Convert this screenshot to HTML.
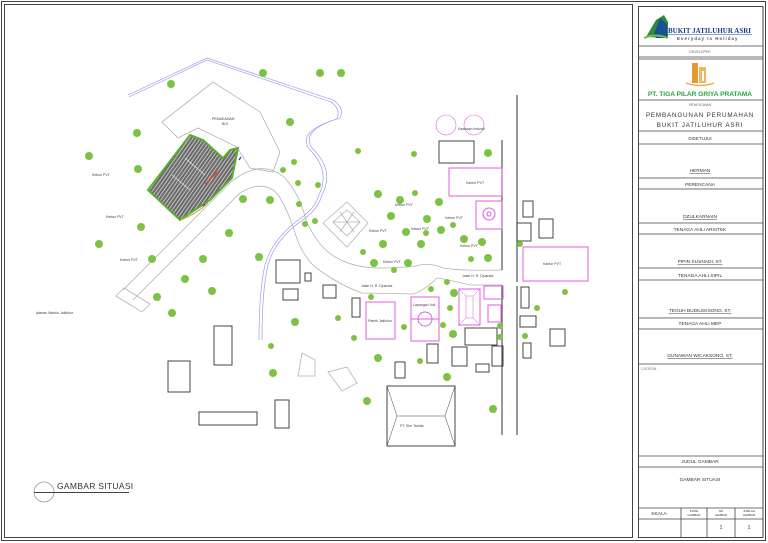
<!DOCTYPE html>
<html><head><meta charset="utf-8"><style>
html,body{margin:0;padding:0;background:#fff;}
svg{display:block;font-family:"Liberation Sans",sans-serif;}
</style></head><body>
<svg width="768" height="543" viewBox="0 0 768 543" xmlns="http://www.w3.org/2000/svg">
<defs>
<pattern id="rows" width="3" height="3" patternUnits="userSpaceOnUse" patternTransform="rotate(35)">
<rect width="3" height="3" fill="#6a6a6a"/><rect width="0.8" height="3" fill="#d8d8d8"/>
</pattern>
</defs>
<rect x="0" y="0" width="768" height="543" fill="#fff"/>
<rect x="1.5" y="1.5" width="764" height="539" fill="none" stroke="#444" stroke-width="1"/>
<rect x="4.5" y="4.5" width="628" height="533" fill="none" stroke="#444" stroke-width="1"/>
<rect x="638.5" y="6.5" width="124.5" height="531" fill="none" stroke="#444" stroke-width="1"/>

<!-- river -->
<g fill="none" stroke="#8f8ff0" stroke-width="0.6">
<path d="M128,95 L207,58 L333,100 Q345,108 340,118 Q300,130 312,148 Q335,170 322,195 Q318,210 300,222 Q275,240 268,265 Q262,290 262,340"/>
<path d="M129,97 L207,60 L331,102 Q341,109 337,119 Q297,131 309,149 Q331,170 319,195 Q315,209 297,221 Q272,240 265,265 Q259,290 259,340"/>
</g>
<!-- roads -->
<g fill="none" stroke="#b4b4b4" stroke-width="0.8">
<path d="M123,290 L232,181 Q262,158 285,178 Q300,195 306,220 Q318,248 337,258 Q355,268 380,268 Q400,268 415,266 Q430,262 443,268 Q460,271 502,270"/>
<path d="M133,300 L240,193 Q265,178 279,196 Q290,215 296,236 Q305,262 322,272 Q340,285 362,293 L413,294 Q425,290 437,278 Q450,280 470,285 L502,285"/>
<path d="M162,122 L213,82 L260,112 L280,152 L273,172 L250,168 L237,147 L198,128 L178,138 Z"/>
<path d="M302,353 L315,360 L315,376 L298,376 Z"/>
<path d="M328,372 L347,367 L357,383 L342,391 Z"/>
<path d="M323,223 L347,202 L368,223 L347,247 Z"/>
<path d="M333,222 L347,210 L360,222 L347,236 Z M333,222 L360,222 M340,212 L354,232 M354,212 L340,232"/>
<path d="M116,296 L124,288 L150,304 L142,312 Z"/>
</g>
<!-- right road -->
<g stroke="#555" stroke-width="1.2">
<line x1="502" y1="140" x2="502" y2="270"/>
<line x1="502" y1="285" x2="502" y2="435"/>
<line x1="517" y1="95" x2="517" y2="282"/>
<line x1="517" y1="286" x2="517" y2="435"/>
</g>
<!-- cemetery -->
<path d="M148,190 L190,135 L203,140 L223,158 L230,150 L238,148 L232,178 L210,200 L180,220 Z" fill="url(#rows)" stroke="#59b02c" stroke-width="2"/>
<path d="M172,175 L190,190 M185,158 L205,175" stroke="#eee" stroke-width="0.6"/>
<line x1="205" y1="184" x2="220" y2="170" stroke="#e44" stroke-width="1.2"/>
<path d="M180,220 Q195,215 208,203" stroke="#c8a030" stroke-width="1" fill="none"/>
<line x1="239" y1="160" x2="241" y2="157" stroke="#33c" stroke-width="1.2"/>
<line x1="203" y1="206" x2="205" y2="204" stroke="#33c" stroke-width="1.2"/>

<!-- black buildings -->
<g fill="none" stroke="#444" stroke-width="1">
<rect x="439" y="141" width="35" height="22"/>
<rect x="523" y="201" width="10" height="16"/>
<rect x="517" y="223" width="14" height="18"/>
<rect x="539" y="219" width="14" height="19"/>
<rect x="276" y="260" width="24" height="23"/>
<rect x="305" y="273" width="6" height="8"/>
<rect x="283" y="289" width="15" height="11"/>
<rect x="323" y="285" width="13" height="13"/>
<rect x="352" y="298" width="8" height="19"/>
<rect x="465" y="328" width="32" height="17"/>
<rect x="427" y="344" width="11" height="19"/>
<rect x="452" y="347" width="15" height="19"/>
<rect x="492" y="346" width="11" height="20"/>
<rect x="476" y="364" width="13" height="8"/>
<rect x="395" y="362" width="10" height="16"/>
<rect x="275" y="400" width="14" height="28"/>
<rect x="521" y="287" width="8" height="21"/>
<rect x="520" y="316" width="16" height="11"/>
<rect x="550" y="329" width="15" height="17"/>
<rect x="523" y="343" width="8" height="15"/>
<rect x="214" y="326" width="18" height="39"/>
<rect x="168" y="361" width="22" height="31"/>
<rect x="199" y="412" width="58" height="13"/>
<rect x="387" y="386" width="68" height="60"/>
<path d="M387,386 L397,416 L445,416 L455,386 M397,416 L387,446 M445,416 L455,446" stroke-width="0.5"/>
</g>
<!-- magenta -->
<g fill="none" stroke="#e05be0" stroke-width="1">
<rect x="449" y="168" width="53" height="28"/>
<rect x="476" y="201" width="26" height="28"/>
<circle cx="489" cy="214" r="6"/><circle cx="489" cy="214" r="2"/>
<rect x="523" y="247" width="65" height="34"/>
<rect x="366" y="302" width="29" height="37"/>
<rect x="411" y="297" width="28" height="44"/>
<line x1="411" y1="319" x2="439" y2="319"/><circle cx="425" cy="319" r="7"/>
<rect x="459" y="289" width="21" height="36"/>
<path d="M459,289 L466,296 L466,318 L459,325 M480,289 L473,296 L473,318 L480,325 M466,296 L473,296 M466,318 L473,318" stroke-width="0.5"/>
<rect x="484" y="286" width="19" height="13"/>
<rect x="488" y="305" width="13" height="17"/>
<circle cx="446" cy="125" r="10" stroke-width="0.6"/>
<circle cx="474" cy="125" r="10" stroke-width="0.6"/>
</g>

<!-- trees -->
<g fill="#7dc242">
<circle cx="171" cy="84" r="4"/><circle cx="263" cy="73" r="4"/><circle cx="320" cy="73" r="4"/><circle cx="341" cy="73" r="4"/>
<circle cx="290" cy="122" r="4"/><circle cx="137" cy="133" r="4"/><circle cx="89" cy="156" r="4"/><circle cx="138" cy="169" r="4"/>
<circle cx="358" cy="151" r="3"/><circle cx="294" cy="162" r="3"/><circle cx="283" cy="170" r="3"/><circle cx="298" cy="183" r="3"/>
<circle cx="318" cy="185" r="3"/><circle cx="378" cy="194" r="4"/><circle cx="243" cy="199" r="4"/><circle cx="270" cy="200" r="4"/>
<circle cx="299" cy="204" r="3"/><circle cx="141" cy="227" r="4"/><circle cx="99" cy="244" r="4"/><circle cx="229" cy="233" r="4"/>
<circle cx="305" cy="224" r="3"/><circle cx="315" cy="221" r="3"/><circle cx="152" cy="259" r="4"/><circle cx="203" cy="259" r="4"/>
<circle cx="259" cy="257" r="4"/><circle cx="363" cy="252" r="3"/><circle cx="374" cy="263" r="4"/><circle cx="185" cy="279" r="4"/>
<circle cx="212" cy="291" r="4"/><circle cx="157" cy="297" r="4"/><circle cx="172" cy="313" r="4"/><circle cx="371" cy="297" r="3"/>
<circle cx="414" cy="154" r="3"/><circle cx="488" cy="153" r="4"/><circle cx="415" cy="193" r="3"/><circle cx="400" cy="200" r="4"/>
<circle cx="439" cy="202" r="4"/><circle cx="391" cy="216" r="4"/><circle cx="427" cy="219" r="4"/><circle cx="453" cy="225" r="3"/>
<circle cx="406" cy="232" r="4"/><circle cx="426" cy="233" r="3"/><circle cx="441" cy="230" r="4"/><circle cx="464" cy="239" r="4"/>
<circle cx="482" cy="242" r="4"/><circle cx="383" cy="244" r="4"/><circle cx="421" cy="244" r="4"/><circle cx="408" cy="263" r="4"/>
<circle cx="394" cy="270" r="3"/><circle cx="471" cy="259" r="3"/><circle cx="488" cy="258" r="4"/><circle cx="520" cy="244" r="3"/>
<circle cx="447" cy="282" r="3"/><circle cx="431" cy="289" r="3"/><circle cx="454" cy="293" r="4"/><circle cx="565" cy="292" r="3"/>
<circle cx="450" cy="308" r="3"/><circle cx="404" cy="327" r="3"/><circle cx="443" cy="325" r="3"/><circle cx="453" cy="334" r="4"/>
<circle cx="500" cy="326" r="3"/><circle cx="500" cy="337" r="3"/><circle cx="537" cy="308" r="3"/><circle cx="525" cy="336" r="3"/>
<circle cx="338" cy="318" r="3"/><circle cx="295" cy="322" r="4"/><circle cx="354" cy="338" r="3"/><circle cx="271" cy="346" r="3"/>
<circle cx="378" cy="358" r="4"/><circle cx="420" cy="361" r="3"/><circle cx="273" cy="373" r="4"/><circle cx="447" cy="377" r="4"/>
<circle cx="367" cy="401" r="4"/><circle cx="493" cy="409" r="4"/>
</g>

<!-- small labels -->
<g fill="#444" font-size="3.5">
<text x="212" y="120">PEMAKAMAN</text><text x="222" y="125">BIJI</text>
<text x="92" y="176">Kebun PVT</text><text x="106" y="218">Kebun PVT</text><text x="120" y="261">Kebun PVT</text>
<text x="36" y="314">jalanan Waduk Jatiluhur</text>
<text x="466" y="184">Kantor PVT</text><text x="543" y="265">Kantor PVT</text>
<text x="458" y="130">Kawasan Industri</text>
<text x="369" y="232">Kebun PVT</text><text x="411" y="230">Kebun PVT</text><text x="445" y="219">Kebun PVT</text>
<text x="460" y="247">Kebun PVT</text><text x="383" y="263">Kebun PVT</text><text x="395" y="206">Kebun PVT</text>
<text x="361" y="287">Jalan H. R. Djuanda</text><text x="462" y="277">Jalan H. R. Djuanda</text>
<text x="368" y="322">Pabrik Jatiluhur</text><text x="413" y="306">Lapangan Voli</text>
<text x="400" y="427">PT. Sinr Tandia</text>
</g>

<!-- drawing title -->
<circle cx="44" cy="492" r="10" fill="none" stroke="#999" stroke-width="0.8"/>
<line x1="34" y1="492.5" x2="129" y2="492.5" stroke="#444" stroke-width="1"/>
<text x="57" y="489" font-size="8.5" fill="#333" letter-spacing="0.3">GAMBAR SITUASI</text>

<!-- title block -->
<g stroke="#444" stroke-width="0.8">
<line x1="638" y1="46" x2="763" y2="46"/>
<line x1="638" y1="57" x2="763" y2="57"/>
<line x1="638" y1="59" x2="763" y2="59"/>
<line x1="638" y1="100" x2="763" y2="100"/>
<line x1="638" y1="131" x2="763" y2="131"/>
<line x1="638" y1="144" x2="763" y2="144"/>
<line x1="638" y1="178" x2="763" y2="178"/>
<line x1="638" y1="189" x2="763" y2="189"/>
<line x1="638" y1="223" x2="763" y2="223"/>
<line x1="638" y1="234" x2="763" y2="234"/>
<line x1="638" y1="268" x2="763" y2="268"/>
<line x1="638" y1="280" x2="763" y2="280"/>
<line x1="638" y1="318" x2="763" y2="318"/>
<line x1="638" y1="329" x2="763" y2="329"/>
<line x1="638" y1="364" x2="763" y2="364"/>
<line x1="638" y1="456" x2="763" y2="456"/>
<line x1="638" y1="467" x2="763" y2="467"/>
<line x1="638" y1="508" x2="763" y2="508"/>
<line x1="681" y1="519" x2="763" y2="519"/>
<line x1="638" y1="519" x2="681" y2="519"/>
<line x1="681" y1="508" x2="681" y2="537"/>
<line x1="707" y1="508" x2="707" y2="537"/>
<line x1="735" y1="508" x2="735" y2="537"/>
</g>
<!-- logo 1 -->
<path d="M646,37 L656,20 L664,15 L668,22 L668,38 Z" fill="#2e8b3a"/>
<path d="M654,34 L660,18 L667,24 L667,38 L656,38 Z" fill="#1b4f9c"/>
<path d="M644,38 Q655,33 668,38" stroke="#6cbf3c" stroke-width="2" fill="none"/>
<text x="668" y="33" font-family="Liberation Serif,serif" font-weight="bold" font-size="7" fill="#1b3e8a">BUKIT JATILUHUR ASRI</text>
<line x1="668" y1="34.5" x2="752" y2="34.5" stroke="#1b3e8a" stroke-width="0.5"/>
<text x="677" y="40" font-size="4.5" font-weight="bold" fill="#555" letter-spacing="1">Everyday Is Holiday</text>
<text x="700" y="53" font-size="3.5" fill="#666" text-anchor="middle">DEVELOPER</text>
<!-- logo 2 -->
<path d="M686,83 Q700,88 714,83" stroke="#e9a44a" stroke-width="1.2" fill="none"/>
<rect x="692" y="63" width="6" height="20" fill="#e39a35"/>
<rect x="699" y="67" width="7" height="16" fill="#f0b760"/>
<rect x="702" y="71" width="2" height="10" fill="#fff"/>
<text x="700" y="96" font-size="6.6" font-weight="bold" fill="#2aa53a" text-anchor="middle">PT. TIGA PILAR GRIYA PRATAMA</text>
<g fill="#333" text-anchor="middle">
<text x="700" y="106" font-size="3.8" font-style="italic" fill="#666">PEKERJAAN</text>
<text x="700" y="117" font-size="6.3" letter-spacing="0.8">PEMBANGUNAN PERUMAHAN</text>
<text x="700" y="127" font-size="6.3" letter-spacing="0.8">BUKIT JATILUHUR ASRI</text>
<text x="700" y="140" font-size="4.5">DISETUJUI</text>
<text x="700" y="172" font-size="4.8" text-decoration="underline">HERMAN</text>
<text x="700" y="186" font-size="4.8">PERENCANA</text>
<text x="700" y="218" font-size="4.8" text-decoration="underline">DZULKARNAIN</text>
<text x="700" y="231" font-size="4.8">TENAGA AHLI ARSITEK</text>
<text x="700" y="263" font-size="4.8" text-decoration="underline">PIPIN KUSNADI, ST.</text>
<text x="700" y="277" font-size="4.8">TENAGA AHLI SIPIL</text>
<text x="700" y="312" font-size="4.8" text-decoration="underline">TEGUH BUDILEKSONO, ST.</text>
<text x="700" y="325" font-size="4.8">TENAGA AHLI MEP</text>
<text x="700" y="357" font-size="4.8" text-decoration="underline">GUNAWAN WICAKSONO, ST.</text>
<text x="700" y="463" font-size="4.8">JUDUL GAMBAR</text>
<text x="700" y="481" font-size="4.8">GAMBAR SITUASI</text>
<text x="659" y="515" font-size="4.8">SKALA</text>
<text x="694" y="512" font-size="3">KODE</text><text x="694" y="516" font-size="3">GAMBAR</text>
<text x="721" y="512" font-size="3">NO</text><text x="721" y="516" font-size="3">LEMBAR</text>
<text x="749" y="512" font-size="3">JUMLAH</text><text x="749" y="516" font-size="3">LEMBAR</text>
<text x="721" y="529" font-size="5">1</text>
<text x="749" y="529" font-size="5">1</text>
</g>
<text x="641" y="370" font-size="3.5" fill="#777">CATATAN :</text>
</svg>
</body></html>
